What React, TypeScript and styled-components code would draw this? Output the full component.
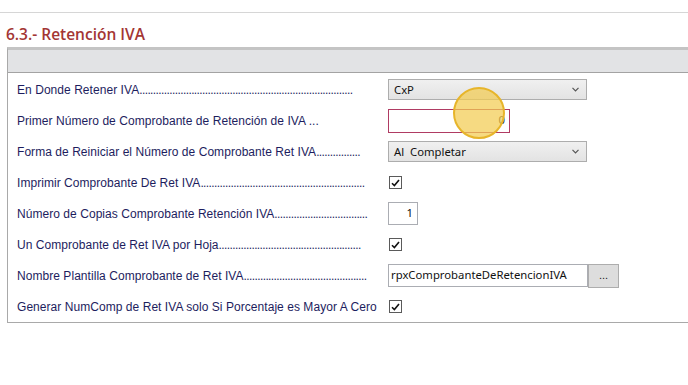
import React from "react";
import styled, { createGlobalStyle } from "styled-components";

const Global = createGlobalStyle`
  html, body { margin: 0; padding: 0; background: #ffffff; }
  body { width: 688px; height: 385px; overflow: hidden; }
`;

const Page = styled.div`
  padding-top: 12px;
`;

const TopRule = styled.div`
  border-top: 1px solid #d6d6d6;
`;

const Title = styled.h2`
  margin: 0;
  padding: 9px 0 0 6px;
  height: 25px;
  font-family: "Open Sans", "Liberation Sans", sans-serif;
  font-size: 15.5px;
  font-weight: 600;
  line-height: 24px;
  color: #a33634;
`;

const Panel = styled.section`
  margin-left: 7px;
  border-left: 1px solid #a9a9a9;
  border-bottom: 1px solid #a9a9a9;
  border-top: 3px solid #c4c4c4;
`;

const PanelHeader = styled.div`
  height: 22px;
  background: #e2e3e5;
  border-bottom: 1px solid #a3a3a3;
`;

const Rows = styled.div`
  display: grid;
  grid-auto-rows: 31px;
  padding: 1px 0 0 9px;
`;

const Row = styled.div`
  display: grid;
  grid-template-columns: 371px 1fr;
  align-items: center;
`;

const Label = styled.div`
  white-space: nowrap;
  font-family: "Liberation Sans", Arial, sans-serif;
  font-size: 12px;
  letter-spacing: 0.05px;
  color: #1d1d5e;
`;

const Leader = styled.span`
  letter-spacing: -0.6px;
`;

const Combo = styled.div`
  width: 199px;
  height: 21px;
  box-sizing: border-box;
  border: 1px solid #adadad;
  background: linear-gradient(#f0f0f0, #e3e3e3);
  display: flex;
  align-items: center;
  justify-content: space-between;
  padding: 0 7px 1px 5px;
  font-family: "Noto Sans", "Open Sans", sans-serif;
  font-size: 11.3px;
  color: #111;
`;

const Chevron = styled.svg`
  width: 7px;
  height: 5px;
`;

const TextBox = styled.div<{ $w: number; $focus?: boolean }>`
  width: ${(p) => p.$w}px;
  height: ${(p) => (p.$focus ? 24 : 23)}px;
  box-sizing: border-box;
  border: 1px solid ${(p) => (p.$focus ? "#b03b63" : "#abadb3")};
  background: #fff;
  display: flex;
  align-items: center;
  justify-content: ${(p) => (p.$focus || p.$w < 60 ? "flex-end" : "flex-start")};
  padding: 0 4px 2px 2px;
  font-family: "Noto Sans", "Open Sans", sans-serif;
  font-size: 11.3px;
  color: #111;
`;

const Group = styled.div`
  display: flex;
  align-items: center;
  position: relative;
`;

const EllipsisButton = styled.button`
  width: 31px;
  height: 24px;
  margin: 0;
  border: 1px solid #adadad;
  background: #dddddd;
  font-family: "Liberation Sans", sans-serif;
  font-size: 11px;
  color: #222;
  padding: 0 0 2px;
`;

const Check = styled.div`
  width: 13px;
  height: 13px;
  margin-left: 1px;
  box-sizing: border-box;
  border: 1px solid #5a5a5a;
  background: #fff;
  display: flex;
  align-items: center;
  justify-content: center;
`;

const Highlight = styled.div`
  position: absolute;
  left: 65px;
  top: -22px;
  width: 52px;
  height: 52px;
  box-sizing: border-box;
  border-radius: 50%;
  border: 2px solid #e7b52a;
  background: rgba(243, 204, 82, 0.72);
`;

const FieldLabel = ({ text, dots }: { text: string; dots: number }) => (
  <Label>
    {text}
    <Leader>{".".repeat(dots)}</Leader>
  </Label>
);

const CheckMark = () => (
  <Check>
    <svg width="9" height="8" viewBox="0 0 9 8">
      <path d="M1 4.2 L3.4 6.6 L8 1" fill="none" stroke="#111" strokeWidth="1.6" />
    </svg>
  </Check>
);

const Arrow = () => (
  <Chevron viewBox="0 0 7 5">
    <path d="M0.5 0.8 L3.5 3.8 L6.5 0.8" fill="none" stroke="#555" strokeWidth="1.2" />
  </Chevron>
);

export default function App() {
  return (
    <Page>
      <Global />
      <TopRule />
      <Title>6.3.- Retención IVA</Title>
      <Panel>
        <PanelHeader />
        <Rows>
          <Row>
            <FieldLabel text="En Donde Retener IVA" dots={78} />
            <Combo>
              CxP
              <Arrow />
            </Combo>
          </Row>
          <Row>
            <Label>Primer Número de Comprobante de Retención de IVA ...</Label>
            <Group>
              <TextBox $w={122} $focus>
                0
              </TextBox>
              <Highlight />
            </Group>
          </Row>
          <Row>
            <FieldLabel text="Forma de Reiniciar el Número de Comprobante Ret IVA" dots={16} />
            <Combo>
              Al&nbsp; Completar
              <Arrow />
            </Combo>
          </Row>
          <Row>
            <FieldLabel text="Imprimir Comprobante De Ret IVA" dots={60} />
            <CheckMark />
          </Row>
          <Row>
            <FieldLabel text="Número de Copias Comprobante Retención IVA" dots={34} />
            <TextBox $w={30}>1</TextBox>
          </Row>
          <Row>
            <FieldLabel text="Un Comprobante de Ret IVA por Hoja" dots={52} />
            <CheckMark />
          </Row>
          <Row>
            <FieldLabel text="Nombre Plantilla Comprobante de Ret IVA" dots={45} />
            <Group>
              <TextBox $w={200}>rpxComprobanteDeRetencionIVA</TextBox>
              <EllipsisButton>...</EllipsisButton>
            </Group>
          </Row>
          <Row>
            <Label>Generar NumComp de Ret IVA solo Si Porcentaje es Mayor A Cero</Label>
            <CheckMark />
          </Row>
        </Rows>
      </Panel>
    </Page>
  );
}
